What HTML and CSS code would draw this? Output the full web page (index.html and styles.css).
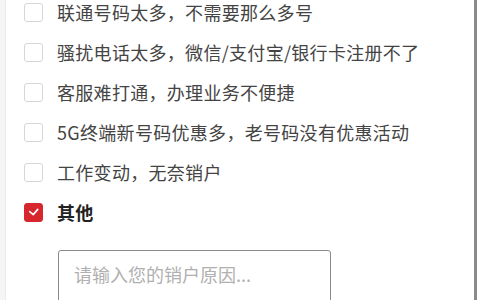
FILE: index.html
```html
<!DOCTYPE html>
<html lang="zh">
<head>
<meta charset="utf-8">
<link rel="stylesheet" href="styles.css">
</head>
<body>
<div class="page">
  <div class="gutter"></div>
  <div class="panel">
    <ul class="options">
      <li class="option"><span class="box"></span><span class="label">联通号码太多，不需要那么多号</span></li>
      <li class="option"><span class="box"></span><span class="label">骚扰电话太多，微信/支付宝/银行卡注册不了</span></li>
      <li class="option"><span class="box"></span><span class="label">客服难打通，办理业务不便捷</span></li>
      <li class="option"><span class="box"></span><span class="label">5G终端新号码优惠多，老号码没有优惠活动</span></li>
      <li class="option"><span class="box"></span><span class="label">工作变动，无奈销户</span></li>
      <li class="option checked"><span class="box"><svg viewBox="0 0 18 18" width="18" height="18"><path d="M5 8.5 L8.7 11.8 L13.5 6.2" fill="none" stroke="#fff" stroke-width="1.7" stroke-linecap="round" stroke-linejoin="round"/></svg></span><span class="label">其他</span></li>
    </ul>
    <div class="reason">请输入您的销户原因...</div>
  </div>
  <div class="edge"></div>
  <div class="margin"></div>
</div>
</body>
</html>
```
FILE: styles.css
```css
html, body {
  margin: 0;
  padding: 0;
  background: #fff;
}
.page {
  display: flex;
  width: 480px;
  height: 300px;
  overflow: hidden;
  font-family: "Noto Sans CJK SC", "Noto Sans", sans-serif;
}
.gutter {
  width: 5px;
  background: #f5f5f5;
  border-right: 1px solid #ebebeb;
}
.panel {
  flex: 1;
  background: #fff;
  padding-left: 18px;
}
.options {
  list-style: none;
  margin: -8px 0 0;
  padding: 0;
}
.option {
  display: flex;
  align-items: center;
  height: 40px;
  gap: 14px;
}
.box {
  width: 17px;
  height: 17px;
  border: 1px solid #d6d6d6;
  border-radius: 3px;
  box-sizing: content-box;
  flex: none;
  display: flex;
  align-items: center;
  justify-content: center;
}
.checked .box {
  background: #d6262e;
  border-color: #d6262e;
}
.checked .box svg {
  display: block;
}
.label {
  font-size: 18px;
  color: #444;
  letter-spacing: 0.3px;
  white-space: nowrap;
}
.checked .label {
  color: #222;
  font-weight: 700;
}
.reason {
  margin: 18px 0 0 34px;
  width: 256px;
  height: 60px;
  border: 1.5px solid #8c8c8c;
  border-radius: 3px;
  padding: 10px 0 0 15px;
  font-size: 18px;
  color: #b0b0b0;
}
.edge {
  width: 3px;
  background: #8a8a8a;
}
.margin {
  width: 3px;
  background: #fff;
}
```
